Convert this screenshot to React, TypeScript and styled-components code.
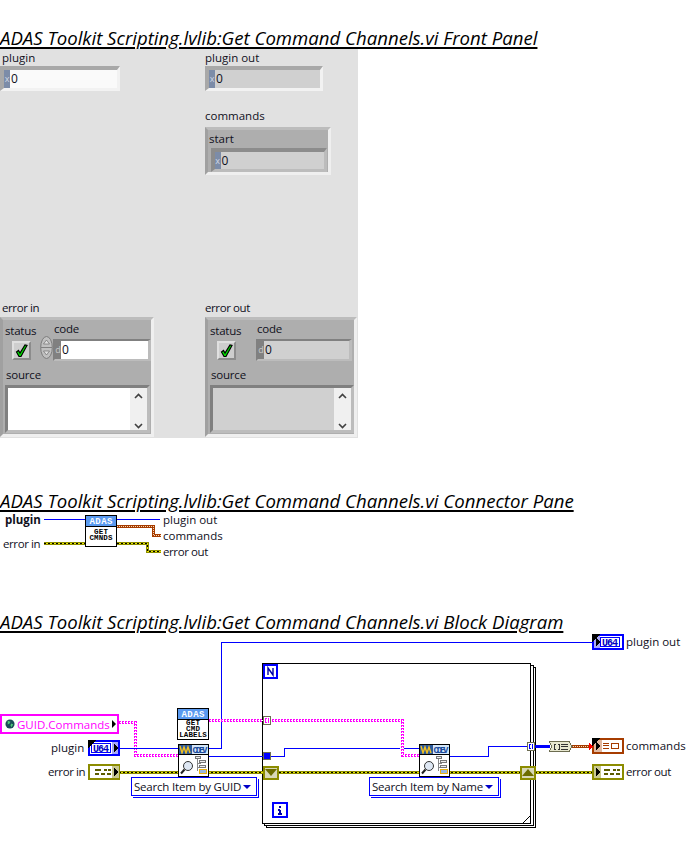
import styled, { createGlobalStyle } from "styled-components";

const UI_FONT = `"Open Sans", "Noto Sans", "Liberation Sans", sans-serif`;
const PIXEL_FONT = `"Liberation Mono", "DejaVu Sans Mono", monospace`;

const GlobalStyle = createGlobalStyle`
  html, body {
    margin: 0;
    padding: 0;
    background: #fff;
  }
  body {
    font-family: ${UI_FONT};
    color: #10101c;
  }
`;

const WIRE = {
  blue: "#0000ff",
  pink: "#ff00ff",
  olive: "#8c8c00",
  orange: "#a63c00",
};

type WireKind = "int" | "array" | "string" | "error" | "label";

function Wire({ kind, d }: { kind: WireKind; d: string }) {
  if (kind === "int") return <path d={d} fill="none" stroke={WIRE.blue} strokeWidth={1} />;
  if (kind === "array") return <path d={d} fill="none" stroke={WIRE.blue} strokeWidth={3} />;
  if (kind === "string")
    return (
      <g fill="none">
        <path d={d} stroke={WIRE.pink} strokeWidth={3} strokeDasharray="2 1" />
        <path d={d} stroke="#fff" strokeWidth={1} />
        <path d={d} stroke={WIRE.pink} strokeWidth={1} strokeDasharray="1 2" />
      </g>
    );
  if (kind === "label")
    return (
      <g fill="none">
        <path d={d} stroke={WIRE.orange} strokeWidth={3} />
        <path d={d} stroke="#f8d8b8" strokeWidth={1} strokeDasharray="1 1" />
      </g>
    );
  return (
    <g fill="none">
      <path d={d} stroke={WIRE.olive} strokeWidth={3} />
      <path d={d} stroke="#e8e800" strokeWidth={1} />
      <path d={d} stroke="#000" strokeWidth={1} strokeDasharray="2 2" />
    </g>
  );
}

function AdasIcon({ x, y, lines }: { x: number; y: number; lines: string[] }) {
  const start = lines.length === 3 ? 17 : 19;
  return (
    <g transform={`translate(${x} ${y})`}>
      <rect x={0.5} y={0.5} width={31} height={31} fill="#fff" stroke="#000" />
      <rect x={1} y={1} width={30} height={10} fill="#5a9af0" />
      <line x1={1} x2={31} y1={11.5} y2={11.5} stroke="#000" />
      <IconText $size={9} x={16} y={9} fill="#fff" textLength={23}>ADAS</IconText>
      {lines.map((line, i) => (
        <IconText key={line} x={16} y={start + i * 6.2} fill="#000" textLength={line.length * 4.6}>
          {line}
        </IconText>
      ))}
    </g>
  );
}

function CdevIcon({ x, y }: { x: number; y: number }) {
  return (
    <g transform={`translate(${x} ${y})`}>
      <rect x={0.5} y={0.5} width={30} height={32} fill="#fff" stroke="#000" />
      <rect x={1} y={1} width={29} height={9} fill="#d4e6f8" />
      <rect x={1} y={1} width={13} height={9} fill="#2c5a9c" />
      <path d="M2 2l2 7 2-6 2 6 2-6 2 6" fill="none" stroke="#f2c020" strokeWidth={1.4} shapeRendering="auto" />
      <IconText $size={9} x={22} y={8.5} fill="#1c4c9c" textLength={15}>CDEV</IconText>
      <line x1={1} x2={30} y1={10.5} y2={10.5} stroke="#000" />
      <g shapeRendering="auto">
        <circle cx={10} cy={22} r={4.5} fill="#dfe8f4" stroke="#333" strokeWidth={1} />
        <line x1={6.5} y1={25.5} x2={3} y2={29.5} stroke="#222" strokeWidth={2} />
      </g>
      <path d="M19.5 15v12M19.5 19.5h3M19.5 23.5h3" fill="none" stroke="#888" />
      <rect x={17.5} y={12.5} width={5} height={2} fill="#eee" stroke="#777" />
      <rect x={21.5} y={16.5} width={6} height={2} fill="#eee" stroke="#777" />
      <rect x={21.5} y={21.5} width={6} height={2} fill="#eee" stroke="#777" />
      <rect x={21.5} y={25.5} width={7} height={4} fill="#9ab8e0" stroke="#e8b010" />
    </g>
  );
}

function TerminalFlag({ x, y }: { x: number; y: number }) {
  return <path d={`M${x} ${y}l4 4-4 4z`} fill="#000" />;
}

function U64Terminal({ x, y, control }: { x: number; y: number; control?: boolean }) {
  return (
    <g transform={`translate(${x} ${y})`}>
      <rect x={1} y={1} width={30} height={14} fill="#fff" stroke={WIRE.blue} strokeWidth={2} />
      <rect x={control ? 24 : 2} y={2} width={6} height={12} fill="#a8a8f8" />
      <rect x={control ? 3.5 : 8.5} y={3.5} width={19} height={9} fill="#fff" stroke={WIRE.blue} />
      <IconText $size={10} x={control ? 13 : 18} y={11.5} fill="#0000c0" textLength={16}>U64</IconText>
      <path d="M0 0h8l-8 8z" fill="#000" />
      <TerminalFlag x={control ? 26 : 4} y={4} />
    </g>
  );
}

function ErrorTerminal({ x, y, control }: { x: number; y: number; control?: boolean }) {
  return (
    <g transform={`translate(${x} ${y})`}>
      <rect x={1} y={1} width={30} height={14} fill="#fff" stroke={WIRE.olive} strokeWidth={2} />
      <rect x={control ? 24 : 2} y={2} width={7} height={12} fill="#c8c890" />
      <g transform={`translate(${control ? 5 : 10} 3)`}>
        <path d="M2 2h6v2H2zM2 6h4v2H2zM11 2h3v2h-3zM15 2h3v2h-3zM8 6h4v2H8zM14 6h4v2h-4z" fill="#5c5c00" />
      </g>
      <TerminalFlag x={control ? 26 : 4} y={4} />
    </g>
  );
}

function StringArrayTerminal({ x, y }: { x: number; y: number }) {
  return (
    <g transform={`translate(${x} ${y})`}>
      <rect x={1} y={1} width={30} height={14} fill="#fff" stroke={WIRE.orange} strokeWidth={2} />
      <rect x={2} y={2} width={8} height={12} fill="#e0b8a0" />
      <path d="M11 5h6M11 7.5h6M11 10h6" stroke={WIRE.orange} />
      <rect x={19.5} y={5.5} width={7} height={5} fill="#fff" stroke={WIRE.orange} />
      <path d="M0 0h8l-8 8z" fill="#000" />
      <TerminalFlag x={4} y={4} />
    </g>
  );
}

function ArrayTunnel({ x, y, color }: { x: number; y: number; color: string }) {
  return (
    <g transform={`translate(${x} ${y})`}>
      <rect x={0.5} y={0.5} width={7} height={8} fill="#fff" stroke="#6c6c50" />
      <path d="M3.5 2.5h-1v4h1M4.5 2.5h1v4h-1" fill="none" stroke={color} />
    </g>
  );
}

function ShiftRegister({ x, y, up }: { x: number; y: number; up?: boolean }) {
  return (
    <g transform={`translate(${x} ${y})`}>
      <rect x={1} y={1} width={14} height={12} fill="#d8d8b8" stroke={WIRE.olive} strokeWidth={2} />
      <path d={up ? "M8 3l6 7H2z" : "M8 10l6-7H2z"} fill="#6c6c00" shapeRendering="auto" />
    </g>
  );
}

function LoopFrames() {
  return (
    <g>
      <rect x={266.5} y={667.5} width={269} height={160} fill="#fff" stroke="#000" />
      <rect x={264.5} y={665.5} width={269} height={160} fill="#fff" stroke="#000" />
      <rect x={262.5} y={663.5} width={268} height={160} fill="#fff" stroke="#000" />
      <path d="M522.5 823.5l8-8v8z" fill="#fff" stroke="#000" />
      <rect x={264} y={665} width={13} height={13} fill="#fff" stroke={WIRE.blue} strokeWidth={2} />
      <path d="M268 675v-7l5 7v-7" fill="none" stroke="#0000a8" strokeWidth={1.4} shapeRendering="auto" />
      <rect x={273} y={803} width={14} height={14} fill="#fff" stroke={WIRE.blue} strokeWidth={2} />
      <path d="M279 807h2M280 810v4M278 814h4M278 810h2" fill="none" stroke="#0000a8" strokeWidth={1.2} />
    </g>
  );
}

function BlockWires() {
  return (
    <DiagramSvg viewBox="0 632 687 221" width={687} height={221} shapeRendering="crispEdges">
      <LoopFrames />

      <Wire kind="int" d="M208 748.5H221.5V642.5H592" />
      <Wire kind="string" d="M119 722.5H135.5V755.5H178" />
      <Wire kind="int" d="M119 748.5H178" />
      <Wire kind="error" d="M119 772.5H592" />

      <Wire kind="string" d="M209 720.5H402.5V755.5H420" />
      <Wire kind="int" d="M208 756.5H284.5V748.5H400M404 748.5H420" />
      <Wire kind="int" d="M450 756.5H488.5V746.5H528" />
      <Wire kind="array" d="M535 746.5H550" />
      <Wire kind="label" d="M571 746.5H592" />

      <AdasIcon x={177} y={708} lines={["GET", "CMD", "LABELS"]} />
      <CdevIcon x={178} y={744} />
      <CdevIcon x={419} y={744} />

      <U64Terminal x={88} y={740} control />
      <ErrorTerminal x={88} y={764} control />
      <U64Terminal x={592} y={634} />
      <StringArrayTerminal x={592} y={738} />
      <ErrorTerminal x={592} y={764} />
      <path d="M589 743l4 3.5-4 3.5z" fill="#ff0000" />

      <ArrayTunnel x={263} y={716} color={WIRE.pink} />
      <rect x={263.5} y={752.5} width={7} height={7} fill={WIRE.blue} stroke="#6c6c50" />
      <ArrayTunnel x={527} y={742} color={WIRE.blue} />
      <ShiftRegister x={263} y={766} />
      <ShiftRegister x={520} y={766} up />

      <g transform="translate(549 741)">
        <path d="M0.5 0.5H20l3 5-3 5H0.5l2-5z" fill="#e8e8d0" stroke="#6c6c50" />
        <path d="M6.5 3h-1v5h1M9 3h1v5H9M12 3h7M12 5.5h7M12 8h7" fill="none" stroke="#333" />
      </g>
    </DiagramSvg>
  );
}

export default function App() {
  return (
    <Page>
      <GlobalStyle />

      <Heading>ADAS Toolkit Scripting.lvlib:Get Command Channels.vi Front Panel</Heading>
      <FrontPanel>
        <PanelColumn>
          <ControlGroup>
            <ControlLabel>plugin</ControlLabel>
            <NumericBox $width={120}>
              <Radix>x</Radix>
              <Value>0</Value>
            </NumericBox>
          </ControlGroup>
          <ControlGroup>
            <ErrorLabel>error in</ErrorLabel>
            <ErrorClusterBox status="control" />
          </ControlGroup>
        </PanelColumn>
        <PanelColumn>
          <div>
            <ControlGroup>
              <ControlLabel $indent={0}>plugin out</ControlLabel>
              <NumericBox $width={118} $indicator>
                <Radix>x</Radix>
                <Value>0</Value>
              </NumericBox>
            </ControlGroup>
            <CommandsGroup>
              <ControlLabel $indent={0}>commands</ControlLabel>
              <ClusterFrame $width={126}>
                <StartLabel>start</StartLabel>
                <NumericBox $width={116} $indicator>
                  <Radix>x</Radix>
                  <Value>0</Value>
                </NumericBox>
              </ClusterFrame>
            </CommandsGroup>
          </div>
          <ControlGroup>
            <ErrorLabel $indent={0}>error out</ErrorLabel>
            <ErrorClusterBox status="indicator" />
          </ControlGroup>
        </PanelColumn>
      </FrontPanel>

      <Heading $gap={53}>ADAS Toolkit Scripting.lvlib:Get Command Channels.vi Connector Pane</Heading>
      <ConnectorCanvas>
        <DiagramSvg viewBox="0 511 687 60" width={687} height={60} shapeRendering="crispEdges">
          <Wire kind="int" d="M44 519.5H85M117 519.5H160" />
          <Wire kind="label" d="M117 526.5H153.5V535.5H161" />
          <Wire kind="error" d="M44 543.5H85M117 543.5H147.5V551.5H161" />
          <AdasIcon x={85} y={515} lines={["GET", "CMNDS"]} />
        </DiagramSvg>
        <CanvasLabel $x={5} $y={512} $bold>plugin</CanvasLabel>
        <CanvasLabel $x={3} $y={536} $tight>error in</CanvasLabel>
        <CanvasLabel $x={163} $y={512}>plugin out</CanvasLabel>
        <CanvasLabel $x={163} $y={528}>commands</CanvasLabel>
        <CanvasLabel $x={163} $y={544} $tight>error out</CanvasLabel>
      </ConnectorCanvas>

      <Heading $gap={41}>ADAS Toolkit Scripting.lvlib:Get Command Channels.vi Block Diagram</Heading>
      <BlockCanvas>
        <BlockWires />
        <GuidConstant>
          <svg width="10" height="10" viewBox="0 0 11 11">
            <circle cx="5.5" cy="5.5" r="5" fill="#1c4c58" />
            <path d="M3 2l3 1-1 2-2 1zM7 5l2 1-2 3-1-2z" fill="#50c878" />
          </svg>
          <span>GUID.Commands</span>
          <GuidArrow />
        </GuidConstant>
        <CanvasLabel $x={51} $y={740} $base={632}>plugin</CanvasLabel>
        <CanvasLabel $x={48} $y={764} $base={632} $tight>error in</CanvasLabel>
        <CanvasLabel $x={626} $y={634} $base={632}>plugin out</CanvasLabel>
        <CanvasLabel $x={626} $y={738} $base={632}>commands</CanvasLabel>
        <CanvasLabel $x={626} $y={764} $base={632} $tight>error out</CanvasLabel>
        <RingConstant $x={131} $width={126}>
          Search Item by GUID
          <RingArrow />
        </RingConstant>
        <RingConstant $x={369} $width={130}>
          Search Item by Name
          <RingArrow />
        </RingConstant>
      </BlockCanvas>
    </Page>
  );
}

function CheckMark() {
  return (
    <svg width="13" height="14" viewBox="0 0 13 14">
      <path d="M1.5 8l2-1.5 1.5 2.5 5-8 2 .5-6 11H4z" fill="#00e000" stroke="#000" strokeWidth="1.2" />
    </svg>
  );
}

function Spinner() {
  return (
    <svg width="13" height="23" viewBox="0 0 13 23">
      <ellipse cx="6.5" cy="11.5" rx="5.8" ry="11" fill="#c0c0c0" stroke="#7c7c7c" />
      <line x1="1" x2="12" y1="11.5" y2="11.5" stroke="#808080" />
      <path d="M6.5 4l3 4h-6zM6.5 19l3-4h-6z" fill="#e0e0e0" stroke="#606060" strokeWidth="0.6" />
    </svg>
  );
}

function ScrollChevron({ up }: { up?: boolean }) {
  return (
    <svg width="9" height="6" viewBox="0 0 9 6">
      <path d={up ? "M1 5l3.5-3.5L8 5" : "M1 1l3.5 3.5L8 1"} fill="none" stroke="#404040" strokeWidth="1.6" />
    </svg>
  );
}

function ErrorClusterBox({ status }: { status: "control" | "indicator" }) {
  const indicator = status === "indicator";
  return (
    <ErrorFrame $indicator={indicator}>
      <ErrorTopRow>
        <StatusColumn $width={indicator ? 48 : 37}>
          <SmallLabel>status</SmallLabel>
          <CheckButton>
            <CheckMark />
          </CheckButton>
        </StatusColumn>
        {!indicator && (
          <SpinnerSlot>
            <Spinner />
          </SpinnerSlot>
        )}
        <CodeColumn>
          <CodeLabel>code</CodeLabel>
          <CodeBox $width={indicator ? 96 : 98} $indicator={indicator}>
            <CodeRadix>d</CodeRadix>
            <Value>0</Value>
          </CodeBox>
        </CodeColumn>
      </ErrorTopRow>
      <SourceLabel>source</SourceLabel>
      <SourceBox $indicator={indicator}>
        <SourceText />
        <ScrollBar>
          <ScrollChevron up />
          <ScrollChevron />
        </ScrollBar>
      </SourceBox>
    </ErrorFrame>
  );
}

const Page = styled.div`
  width: 687px;
  height: 853px;
  overflow: hidden;
  padding-top: 28px;
  box-sizing: border-box;
`;

const Heading = styled.h2<{ $gap?: number }>`
  margin: ${(p) => p.$gap ?? 0}px 0 0;
  height: 20px;
  font-size: 18.6px;
  line-height: 20px;
  font-weight: 400;
  font-style: italic;
  white-space: nowrap;
  color: #000;
  text-decoration: underline;
  text-decoration-thickness: 2px;
  text-underline-offset: 2px;
`;

const FrontPanel = styled.section`
  display: grid;
  grid-template-columns: 205px 153px;
  width: 358px;
  height: 390px;
  box-sizing: border-box;
  padding: 2px 0 1px;
  background: #e1e1e1;
`;

const PanelColumn = styled.div`
  display: flex;
  flex-direction: column;
  justify-content: space-between;
`;

const ControlGroup = styled.div`
  display: flex;
  flex-direction: column;
`;

const CommandsGroup = styled(ControlGroup)`
  margin-top: 17px;
`;

const ControlLabel = styled.div<{ $indent?: number }>`
  height: 16px;
  padding-left: ${(p) => p.$indent ?? 2}px;
  font-size: 11.5px;
  line-height: 16px;

  ${CommandsGroup} > & {
    height: 19px;
  }
`;

const ErrorLabel = styled(ControlLabel)`
  line-height: 14px;
  letter-spacing: -0.4px;
`;

const NumericBox = styled.div<{ $width: number; $indicator?: boolean }>`
  display: flex;
  box-sizing: border-box;
  width: ${(p) => p.$width}px;
  height: 25px;
  border-style: solid;
  border-width: 4px 3px 3px 4px;
  border-color: #a8a8a8 #f2f2f2 #f2f2f2 #a8a8a8;
  background: ${(p) => (p.$indicator ? "#d0d0d0" : "#fafafa")};
`;

const Radix = styled.span`
  width: 6px;
  background: #7c8ca8;
  color: #d0d8e4;
  font-size: 9px;
  line-height: 17px;
  text-align: center;
`;

const Value = styled.span`
  padding-left: 1px;
  font-size: 12px;
  line-height: 17px;
`;

const ClusterFrame = styled.div<{ $width: number }>`
  display: flex;
  flex-direction: column;
  align-items: center;
  box-sizing: border-box;
  width: ${(p) => p.$width}px;
  height: 48px;
  border-style: solid;
  border-width: 3px;
  border-color: #bcbcbc #efefef #efefef #a0a0a0;
  background: #aeaeae;

  ${NumericBox} {
    width: 116px;
    height: 24px;
    margin-left: 1px;
    border-color: #8c8c8c #bcbcbc #bcbcbc #8c8c8c;
  }
`;

const StartLabel = styled.div`
  align-self: flex-start;
  height: 18px;
  padding-left: 1px;
  font-size: 11.5px;
  line-height: 18px;
`;

const ErrorFrame = styled.div<{ $indicator: boolean }>`
  box-sizing: border-box;
  width: ${(p) => (p.$indicator ? 152 : 154)}px;
  height: 120px;
  border-style: solid;
  border-width: 3px;
  border-color: #bcbcbc #efefef #efefef #a0a0a0;
  background: #aeaeae;
`;

const ErrorTopRow = styled.div`
  display: flex;
  height: 44px;
`;

const StatusColumn = styled.div<{ $width: number }>`
  display: flex;
  flex-direction: column;
  box-sizing: border-box;
  width: ${(p) => p.$width}px;
  padding: 3px 0 0 2px;
`;

const SmallLabel = styled.div`
  height: 15px;
  font-size: 11.5px;
  line-height: 15px;
  letter-spacing: -0.2px;
`;

const CheckButton = styled.div`
  display: flex;
  align-items: center;
  justify-content: center;
  box-sizing: border-box;
  width: 19px;
  height: 19px;
  margin: 3px 0 0 7px;
  border-style: solid;
  border-width: 2px;
  border-color: #e0e0e0 #8c8c8c #8c8c8c #e0e0e0;
  background: #cecece;
`;

const SpinnerSlot = styled.div`
  width: 13px;
  padding-top: 16px;
`;

const CodeColumn = styled.div`
  display: flex;
  flex-direction: column;
`;

const CodeLabel = styled(SmallLabel)`
  padding: 1px 0 2px 1px;
  height: 16px;
`;

const CodeBox = styled(NumericBox)`
  height: 22px;
  border-width: 2px 3px 2px 2px;
  border-color: #808080 #bcbcbc #bcbcbc #808080;
  background: ${(p) => (p.$indicator ? "#d0d0d0" : "#fff")};
`;

const CodeRadix = styled(Radix)`
  background: #808080;
  color: #c8c8c8;
  line-height: 18px;
`;

const SourceLabel = styled(SmallLabel)`
  padding: 3px 0 3px 3px;
`;

const SourceBox = styled.div<{ $indicator: boolean }>`
  display: flex;
  box-sizing: border-box;
  width: ${(p) => (p.$indicator ? 144 : 145)}px;
  height: 48px;
  margin-left: 2px;
  border-style: solid;
  border-width: 3px;
  border-color: #808080 #bcbcbc #bcbcbc #808080;
  background: ${(p) => (p.$indicator ? "#d0d0d0" : "#fff")};
`;

const SourceText = styled.div`
  flex: 1;
`;

const ScrollBar = styled.div`
  display: flex;
  flex-direction: column;
  align-items: center;
  justify-content: space-between;
  box-sizing: border-box;
  width: 17px;
  padding: 5px 0 1px;
  background: #f0f0f0;
`;

const ConnectorCanvas = styled.div`
  position: relative;
  height: 60px;
`;

const BlockCanvas = styled.div`
  position: relative;
  height: 221px;
`;

const DiagramSvg = styled.svg`
  position: absolute;
  left: 0;
  top: 0;
`;

const IconText = styled.text<{ $size?: number }>`
  font-family: ${PIXEL_FONT};
  font-size: ${(p) => p.$size ?? 7.5}px;
  font-weight: 700;
  text-anchor: middle;
`;

const CanvasLabel = styled.div<{ $x: number; $y: number; $base?: number; $bold?: boolean; $tight?: boolean }>`
  position: absolute;
  left: ${(p) => p.$x}px;
  top: ${(p) => p.$y - (p.$base ?? 511)}px;
  font-size: 11.5px;
  line-height: 15px;
  font-weight: ${(p) => (p.$bold ? 700 : 400)};
  letter-spacing: ${(p) => (p.$tight ? "-0.4px" : "normal")};
  white-space: nowrap;
`;

const GuidConstant = styled.div`
  position: absolute;
  left: 0;
  top: 82px;
  display: flex;
  align-items: center;
  gap: 2px;
  box-sizing: border-box;
  width: 119px;
  height: 20px;
  padding-left: 3px;
  border: 2px solid ${WIRE.pink};
  background: #fff;
  color: ${WIRE.pink};
  font-size: 11.5px;
`;

const GuidArrow = styled.i`
  position: absolute;
  right: 1px;
  top: 4px;
  border-style: solid;
  border-width: 4px 0 4px 4px;
  border-color: transparent transparent transparent #000;
`;

const RingConstant = styled.div<{ $x: number; $width: number }>`
  position: absolute;
  left: ${(p) => p.$x}px;
  top: 145px;
  display: flex;
  align-items: center;
  justify-content: space-between;
  box-sizing: border-box;
  width: ${(p) => p.$width}px;
  height: 19px;
  padding: 0 5px 0 2px;
  border: 1px solid ${WIRE.blue};
  box-shadow: 1px 1px 0 #fff, 2px 2px 0 ${WIRE.blue};
  background: #fff;
  font-size: 11.5px;
  letter-spacing: -0.2px;
  white-space: nowrap;
`;

const RingArrow = styled.i`
  border-style: solid;
  border-width: 4px 4px 0;
  border-color: #0000c8 transparent transparent;
`;
